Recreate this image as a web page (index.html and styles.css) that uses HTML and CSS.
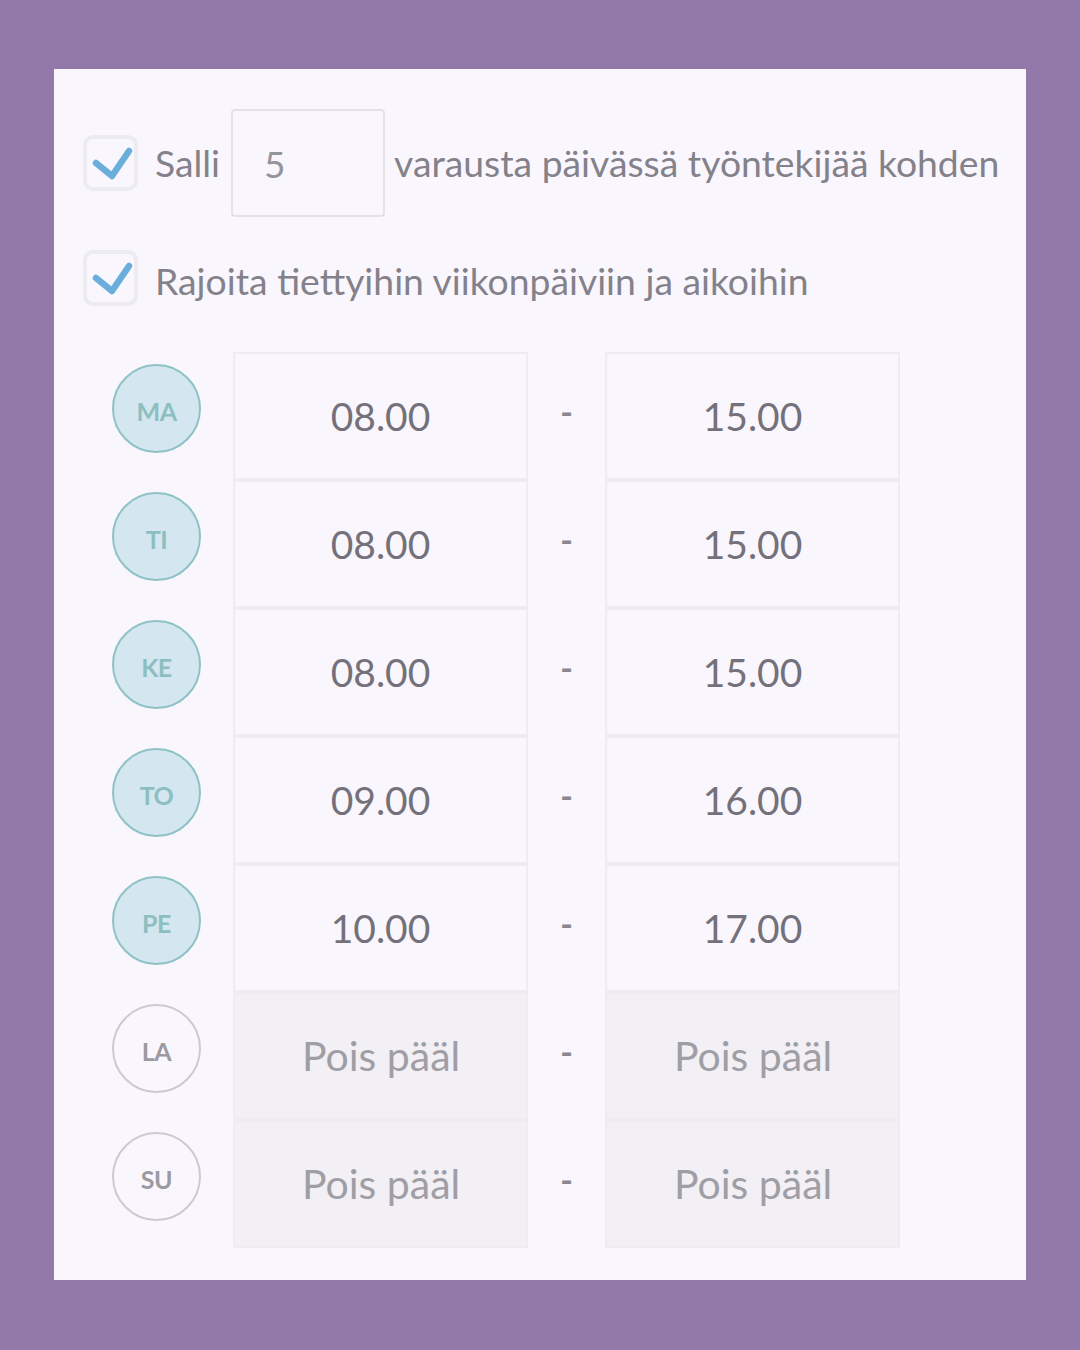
FILE: index.html
```html
<!DOCTYPE html>
<html lang="fi">
<head>
<meta charset="utf-8">
<title>Varausasetukset</title>
<link rel="stylesheet" href="styles.css">
</head>
<body>
<main class="card">
  <div class="option option-limit">
    <span class="checkbox"><svg viewBox="0 0 55 56"><polyline points="13,28 29,41 46,16"/></svg></span>
    <span class="label">Salli</span>
    <span class="count-input">5</span>
    <span class="label">varausta päivässä työntekijää kohden</span>
  </div>
  <div class="option option-days">
    <span class="checkbox"><svg viewBox="0 0 55 56"><polyline points="13,28 29,41 46,16"/></svg></span>
    <span class="label">Rajoita tiettyihin viikonpäiviin ja aikoihin</span>
  </div>

  <div class="schedule">
    <div class="day on"><span class="day-badge">MA</span></div>
    <div class="time on"><span class="time-text">08.00</span></div>
    <div class="dash">-</div>
    <div class="time on"><span class="time-text">15.00</span></div>

    <div class="day on"><span class="day-badge">TI</span></div>
    <div class="time on"><span class="time-text">08.00</span></div>
    <div class="dash">-</div>
    <div class="time on"><span class="time-text">15.00</span></div>

    <div class="day on"><span class="day-badge">KE</span></div>
    <div class="time on"><span class="time-text">08.00</span></div>
    <div class="dash">-</div>
    <div class="time on"><span class="time-text">15.00</span></div>

    <div class="day on"><span class="day-badge">TO</span></div>
    <div class="time on"><span class="time-text">09.00</span></div>
    <div class="dash">-</div>
    <div class="time on"><span class="time-text">16.00</span></div>

    <div class="day on"><span class="day-badge">PE</span></div>
    <div class="time on"><span class="time-text">10.00</span></div>
    <div class="dash">-</div>
    <div class="time on"><span class="time-text">17.00</span></div>

    <div class="day off"><span class="day-badge">LA</span></div>
    <div class="time off"><span class="time-text">Pois päältä</span></div>
    <div class="dash">-</div>
    <div class="time off"><span class="time-text">Pois päältä</span></div>

    <div class="day off"><span class="day-badge">SU</span></div>
    <div class="time off"><span class="time-text">Pois päältä</span></div>
    <div class="dash">-</div>
    <div class="time off"><span class="time-text">Pois päältä</span></div>
  </div>
</main>
</body>
</html>
```
FILE: styles.css
```css
html, body {
  margin: 0;
  padding: 0;
}

body {
  background: #9279aa;
  width: 1080px;
  height: 1350px;
  padding-top: 69px;
  box-sizing: border-box;
  font-family: Lato, "Noto Sans", sans-serif;
  color: #86838b;
}

.card {
  margin-left: 54px;
  width: 972px;
  height: 1211px;
  box-sizing: border-box;
  background: #f9f7fd;
  padding: 40px 0 0 29px;
}

.option {
  display: flex;
  align-items: center;
}

.option-days {
  margin-top: 33px;
}

.option-days .label {
  padding-top: 6px;
}

.checkbox {
  width: 55px;
  height: 56px;
  box-sizing: border-box;
  border: 4px solid #ecebef;
  border-radius: 10px;
  background: #f9f7fd;
  flex: none;
  margin-right: 17px;
  position: relative;
}

.checkbox svg {
  position: absolute;
  left: -4px;
  top: -4px;
  width: 55px;
  height: 56px;
}

.checkbox polyline {
  fill: none;
  stroke: #6aafdc;
  stroke-width: 6.5;
  stroke-linecap: round;
  stroke-linejoin: round;
}

.label {
  font-size: 37.3px;
  line-height: 44px;
  color: #84818a;
  white-space: nowrap;
}

.count-input {
  width: 154px;
  height: 108px;
  box-sizing: border-box;
  border: 2px solid #e4e2e7;
  border-radius: 4px;
  margin: 0 9px 0 11px;
  padding-left: 31px;
  display: flex;
  align-items: center;
  font-size: 37px;
  color: #96939b;
}

.schedule {
  margin-top: 46px;
  margin-left: 29px;
  display: grid;
  grid-template-columns: 121px 295px 77px 295px;
  grid-auto-rows: 128px;
}

.day {
  display: flex;
  align-items: flex-start;
  padding-top: 12px;
}

.day-badge {
  width: 89px;
  height: 89px;
  box-sizing: border-box;
  border-radius: 50%;
  display: flex;
  align-items: center;
  justify-content: center;
  font-size: 25px;
  font-weight: 700;
  letter-spacing: -0.5px;
  padding-top: 4px;
}

.day.on .day-badge {
  background: #d4e6f0;
  border: 2.5px solid #8ec2c5;
  color: #8dbfc1;
}

.day.off .day-badge {
  border: 2.5px solid #cccacf;
  color: #9c9aa1;
}

.time {
  box-sizing: border-box;
  border: 2px solid #eeecf1;
  display: flex;
  align-items: center;
  justify-content: center;
}

.time.on {
  background: #f9f7fd;
}

.time.off {
  background: #f2f0f5;
}

.time-text {
  width: 158px;
  overflow: hidden;
  white-space: nowrap;
  font-size: 39px;
  line-height: 52px;
}

.time.on .time-text {
  text-align: center;
  color: #74717a;
}

.time.off .time-text {
  width: 157px;
  font-size: 41px;
  text-align: left;
  color: #a09ea5;
}

.dash {
  display: flex;
  align-items: center;
  justify-content: center;
  font-size: 34px;
  font-weight: 700;
  color: #8a8790;
  padding-bottom: 10px;
}
```
